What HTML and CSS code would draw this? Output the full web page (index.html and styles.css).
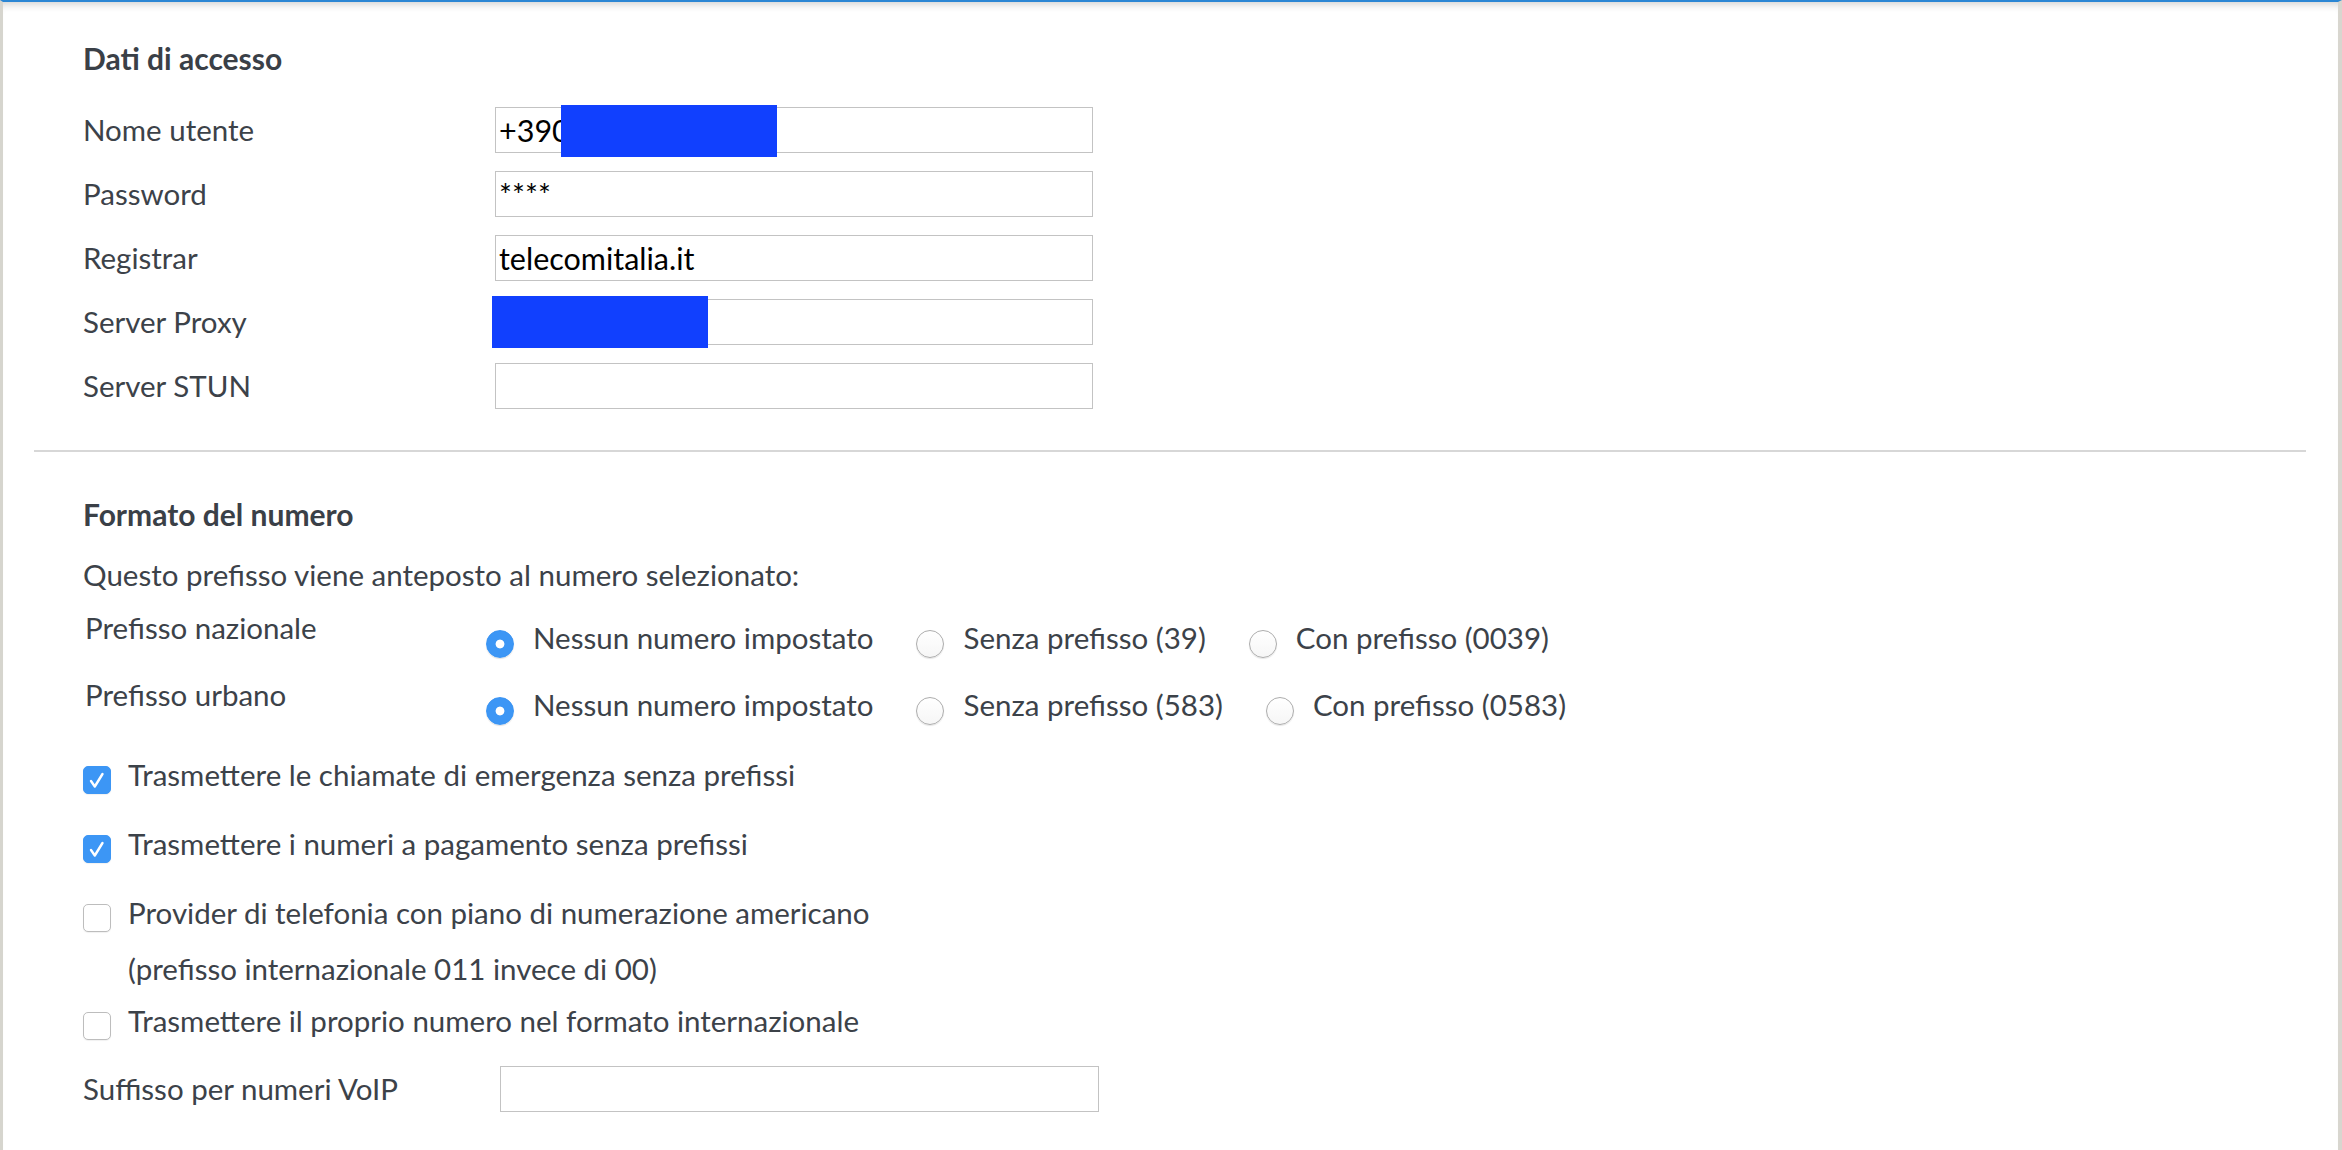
FILE: index.html
```html
<!DOCTYPE html>
<html lang="it">
<head>
<meta charset="utf-8">
<title>Telefonia – Dati di accesso</title>
<link rel="stylesheet" href="styles.css">
</head>
<body>
<div class="panel">

  <section class="block access">
    <h2 class="block-title">Dati di accesso</h2>
    <div class="fields">
      <div class="field">
        <label class="field-label" for="user">Nome utente</label>
        <div class="field-box">
          <input class="text-input" id="user" type="text" value="+390">
          <span class="mask mask-user"></span>
        </div>
      </div>
      <div class="field">
        <label class="field-label" for="pass">Password</label>
        <div class="field-box">
          <input class="text-input" id="pass" type="text" value="****">
        </div>
      </div>
      <div class="field">
        <label class="field-label" for="registrar">Registrar</label>
        <div class="field-box">
          <input class="text-input" id="registrar" type="text" value="telecomitalia.it">
        </div>
      </div>
      <div class="field">
        <label class="field-label" for="proxy">Server Proxy</label>
        <div class="field-box">
          <input class="text-input" id="proxy" type="text" value="">
          <span class="mask mask-proxy"></span>
        </div>
      </div>
      <div class="field">
        <label class="field-label" for="stun">Server STUN</label>
        <div class="field-box">
          <input class="text-input" id="stun" type="text" value="">
        </div>
      </div>
    </div>
  </section>

  <hr class="divider">

  <section class="block numbering">
    <h2 class="block-title">Formato del numero</h2>
    <p class="intro">Questo prefisso viene anteposto al numero selezionato:</p>

    <div class="choice-row">
      <span class="choice-label">Prefisso nazionale</span>
      <div class="options">
        <label class="option"><span class="radio is-checked"></span><span>Nessun numero impostato</span></label>
        <label class="option"><span class="radio"></span><span>Senza prefisso (39)</span></label>
        <label class="option"><span class="radio"></span><span>Con prefisso (0039)</span></label>
      </div>
    </div>
    <div class="choice-row">
      <span class="choice-label">Prefisso urbano</span>
      <div class="options">
        <label class="option"><span class="radio is-checked"></span><span>Nessun numero impostato</span></label>
        <label class="option"><span class="radio"></span><span>Senza prefisso (583)</span></label>
        <label class="option"><span class="radio"></span><span>Con prefisso (0583)</span></label>
      </div>
    </div>

    <div class="checks">
      <label class="check">
        <span class="checkbox is-checked"><svg viewBox="0 0 28 28" width="28" height="28"><path d="M8 15 L11.8 20.5 L19.5 8" /></svg></span>
        <span class="check-text">Trasmettere le chiamate di emergenza senza prefissi</span>
      </label>
      <label class="check">
        <span class="checkbox is-checked"><svg viewBox="0 0 28 28" width="28" height="28"><path d="M8 15 L11.8 20.5 L19.5 8" /></svg></span>
        <span class="check-text">Trasmettere i numeri a pagamento senza prefissi</span>
      </label>
      <label class="check">
        <span class="checkbox"></span>
        <span class="check-text">
          <span class="line">Provider di telefonia con piano di numerazione americano</span>
          <span class="line note">(prefisso internazionale 011 invece di 00)</span>
        </span>
      </label>
      <label class="check">
        <span class="checkbox"></span>
        <span class="check-text">Trasmettere il proprio numero nel formato internazionale</span>
      </label>
    </div>

    <div class="field suffix">
      <label class="field-label" for="suffix">Suffisso per numeri VoIP</label>
      <div class="field-box">
        <input class="text-input" id="suffix" type="text" value="">
      </div>
    </div>
  </section>

</div>
</body>
</html>
```

FILE: styles.css
```css
* {
  box-sizing: border-box;
}

html,
body {
  margin: 0;
  background: #fff;
}

body {
  font-family: Lato, "Source Sans Pro", "Liberation Sans", sans-serif;
  font-size: 29.5px;
  line-height: 36px;
  color: #3c4249;
}

/* framed content area with the blue accent line on top */
.panel {
  min-height: 1150px;
  border-top: 2px solid #2b86d4;
  border-left: 3px solid #d6d5ce;
  border-right: 4px solid #d8d6cf;
  box-shadow: inset 0 9px 9px -7px rgba(0, 0, 0, 0.2);
}

.block {
  padding-left: 80px;
}

.block-title {
  margin: 0;
  font-size: 30px;
  font-weight: 700;
  line-height: 36px;
  color: #3a4047;
}

/* ---- access data ---- */
.access {
  padding-top: 38px;
}

.fields {
  margin-top: 31px;
  display: flex;
  flex-direction: column;
  gap: 18px;
}

.field {
  display: flex;
  align-items: center;
  height: 46px;
}

.field-label {
  flex: none;
  width: 412px;
}

.field-box {
  position: relative;
  width: 598px;
  height: 46px;
}

.text-input {
  display: block;
  width: 100%;
  height: 100%;
  margin: 0;
  padding: 0 3px;
  border: 1px solid #c3c3c3;
  background: #fff;
  font-family: inherit;
  font-size: 30.5px;
  color: #000;
  outline: none;
}

/* solid blocks covering private values */
.mask {
  position: absolute;
  width: 216px;
  height: 52px;
  background: #1140fe;
}

.mask-user {
  left: 66px;
  top: -2px;
}

.mask-proxy {
  left: -3px;
  top: -3px;
}

.divider {
  height: 2px;
  margin: 41px 32px 0 31px;
  border: 0;
  background: #d7d7d7;
}

/* ---- number format ---- */
.numbering {
  padding-top: 44px;
}

.intro {
  margin: 25px 0 0;
}

.choice-row {
  display: flex;
  align-items: flex-start;
  margin-top: 19px;
}

.intro + .choice-row {
  margin-top: 17px;
}

.choice-label {
  flex: none;
  width: 403px;
  padding-left: 2px;
}

.options {
  display: flex;
  gap: 43px;
  margin-top: 10px;
}

.option {
  display: flex;
  align-items: flex-start;
  gap: 19px;
  white-space: nowrap;
}

.radio {
  flex: none;
  width: 28px;
  height: 28px;
  margin-top: 10px;
  border-radius: 50%;
  border: 1px solid #adadad;
  background: linear-gradient(#ffffff, #f6f6f6);
  box-shadow: 0 1px 1px rgba(0, 0, 0, 0.1);
}

.radio.is-checked {
  border-color: #3a94f3;
  background: radial-gradient(circle, #fff 0 4px, #3c96f5 4.8px);
  box-shadow: 0 1px 1px rgba(0, 0, 0, 0.12);
}

.checks {
  margin-top: 32px;
  display: flex;
  flex-direction: column;
  gap: 32px;
}

.check {
  display: flex;
  align-items: flex-start;
  gap: 17px;
}

.checks .check:last-child {
  margin-top: -16px;
}

.checkbox {
  flex: none;
  width: 28px;
  height: 28px;
  margin-top: 9px;
  border-radius: 5px;
  border: 1px solid #bdbdbd;
  background: #fff;
  box-shadow: 0 1px 1px rgba(0, 0, 0, 0.06);
}

.checkbox.is-checked {
  border-color: #3c96f5;
  background: #3c96f5;
}

.checkbox svg {
  display: block;
  margin: -1px;
}

.checkbox path {
  fill: none;
  stroke: #fff;
  stroke-width: 2.4;
  stroke-linecap: round;
  stroke-linejoin: round;
}

.check-text .line {
  display: block;
}

.check-text .note {
  margin-top: 20px;
}

.suffix {
  margin-top: 26px;
}

.suffix .field-label {
  width: 417px;
}

.suffix .field-box {
  width: 599px;
}
```
